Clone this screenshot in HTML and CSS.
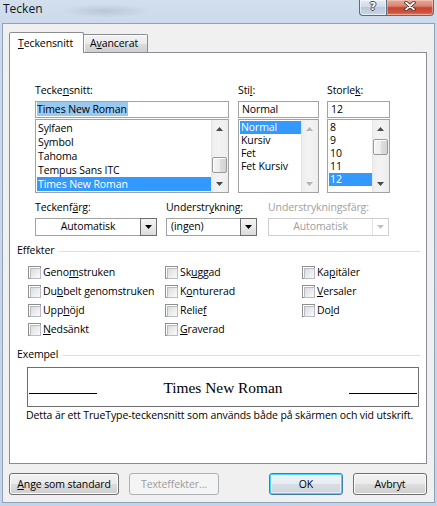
FILE: index.html
```html
<!DOCTYPE html>
<html lang="sv">
<head>
<meta charset="utf-8">
<title>Tecken</title>
<link rel="stylesheet" href="styles.css">
</head>
<body>
<div class="window">
  <div class="titlebar">
    <div class="title">Tecken</div>
    <div class="caption-buttons">
      <div class="cap-btn help"><span>?</span></div>
      <div class="cap-btn close">
        <svg width="12" height="10" viewBox="0 0 12 10"><path d="M2 1.5L10 8.5M10 1.5L2 8.5" stroke="#3a2320" stroke-width="3.4" stroke-linecap="round"/><path d="M2 1.5L10 8.5M10 1.5L2 8.5" stroke="#fff" stroke-width="1.8" stroke-linecap="round"/></svg>
      </div>
    </div>
  </div>
  <div class="client">
    <div class="tabs">
      <div class="tab active"><u>T</u>eckensnitt</div>
      <div class="tab inactive">A<u>v</u>ancerat</div>
    </div>
    <div class="panel">
      <div class="font-row">
        <div class="col-font">
          <div class="label">Tecke<u>n</u>snitt:</div>
          <div class="textbox"><span class="text-sel">Times New Roman</span></div>
          <div class="listbox">
            <div class="items">
              <div class="item">Sylfaen</div>
              <div class="item">Symbol</div>
              <div class="item">Tahoma</div>
              <div class="item">Tempus Sans ITC</div>
              <div class="item sel">Times New Roman</div>
            </div>
            <div class="scrollbar">
              <div class="sb-arrow"><svg width="7" height="4" viewBox="0 0 7 4"><path d="M3.5 0L7 4H0z" fill="#4a4a4a"/></svg></div>
              <div class="sb-track"><div class="thumb thumb-font"></div></div>
              <div class="sb-arrow"><svg width="7" height="4" viewBox="0 0 7 4"><path d="M0 0H7L3.5 4z" fill="#4a4a4a"/></svg></div>
            </div>
          </div>
        </div>
        <div class="col-style">
          <div class="label">Sti<u>l</u>:</div>
          <div class="textbox pad2">Normal</div>
          <div class="listbox">
            <div class="items short">
              <div class="item sel">Normal</div>
              <div class="item">Kursiv</div>
              <div class="item">Fet</div>
              <div class="item">Fet Kursiv</div>
            </div>
            <div class="scrollbar">
              <div class="sb-arrow"><svg width="7" height="4" viewBox="0 0 7 4"><path d="M3.5 0L7 4H0z" fill="#b4b4b4"/></svg></div>
              <div class="sb-track"></div>
              <div class="sb-arrow"><svg width="7" height="4" viewBox="0 0 7 4"><path d="M0 0H7L3.5 4z" fill="#b4b4b4"/></svg></div>
            </div>
          </div>
        </div>
        <div class="col-size">
          <div class="label">Storle<u>k</u>:</div>
          <div class="textbox pad2">12</div>
          <div class="listbox">
            <div class="items short">
              <div class="item">8</div>
              <div class="item">9</div>
              <div class="item">10</div>
              <div class="item">11</div>
              <div class="item sel">12</div>
            </div>
            <div class="scrollbar">
              <div class="sb-arrow"><svg width="7" height="4" viewBox="0 0 7 4"><path d="M3.5 0L7 4H0z" fill="#4a4a4a"/></svg></div>
              <div class="sb-track"><div class="thumb thumb-size"></div></div>
              <div class="sb-arrow"><svg width="7" height="4" viewBox="0 0 7 4"><path d="M0 0H7L3.5 4z" fill="#4a4a4a"/></svg></div>
            </div>
          </div>
        </div>
      </div>

      <div class="dd-row">
        <div class="dd-col1">
          <div class="label">Teckenf<u>ä</u>rg:</div>
          <div class="combo">
            <div class="combo-text center">Automatisk</div>
            <div class="combo-btn"><svg width="7" height="4" viewBox="0 0 7 4"><path d="M0 0H7L3.5 4z" fill="#000"/></svg></div>
          </div>
        </div>
        <div class="dd-col2">
          <div class="label">Understr<u>y</u>kning:</div>
          <div class="combo">
            <div class="combo-text left">(ingen)</div>
            <div class="combo-btn"><svg width="7" height="4" viewBox="0 0 7 4"><path d="M0 0H7L3.5 4z" fill="#000"/></svg></div>
          </div>
        </div>
        <div class="dd-col3">
          <div class="label disabled">Understrykningsfärg:</div>
          <div class="combo combo-disabled">
            <div class="combo-text center">Automatisk</div>
            <div class="combo-btn-disabled"><svg width="7" height="4" viewBox="0 0 7 4"><path d="M0 0H7L3.5 4z" fill="#c2c2c2"/></svg></div>
          </div>
        </div>
      </div>

      <div class="group group-effects">Effekter</div>
      <div class="effects">
        <div class="check"><span class="cb"></span>Geno<u>m</u>struken</div>
        <div class="check"><span class="cb"></span>Sk<u>u</u>ggad</div>
        <div class="check"><span class="cb"></span>Ka<u>p</u>itäler</div>
        <div class="check"><span class="cb"></span>Du<u>b</u>belt genomstruken</div>
        <div class="check"><span class="cb"></span>K<u>o</u>nturerad</div>
        <div class="check"><span class="cb"></span><u>V</u>ersaler</div>
        <div class="check"><span class="cb"></span>Upp<u>h</u>öjd</div>
        <div class="check"><span class="cb"></span>Relie<u>f</u></div>
        <div class="check"><span class="cb"></span>Do<u>l</u>d</div>
        <div class="check"><span class="cb"></span><u>N</u>edsänkt</div>
        <div class="check"><span class="cb"></span><u>G</u>raverad</div>
      </div>

      <div class="group group-sample">Exempel</div>
      <div class="preview">
        <div class="preview-line"></div>
        <div class="preview-text">Times New Roman</div>
        <div class="preview-line"></div>
      </div>
      <div class="desc">Detta är ett TrueType-teckensnitt som används både på skärmen och vid utskrift.</div>
    </div>

    <div class="buttons">
      <div class="btn btn-default-set"><span><u>A</u>nge som standard</span></div>
      <div class="btn btn-disabled btn-effects">Texteffekter…</div>
      <div class="btn btn-focus btn-ok">OK</div>
      <div class="btn btn-cancel">Avbryt</div>
    </div>
  </div>
</div>
</body>
</html>
```

FILE: styles.css
```css
* { box-sizing: border-box; }
html, body { margin: 0; padding: 0; }
body {
  width: 437px;
  height: 506px;
  overflow: hidden;
  font-family: "Open Sans", "Noto Sans", sans-serif;
  font-size: 10.5px;
  letter-spacing: -0.1px;
  line-height: 15px;
  color: #000;
  background: #c4d5ea;
}
u { text-decoration: underline; text-underline-offset: 1px; text-decoration-thickness: 1px; }

.window {
  width: 437px;
  height: 506px;
  display: flex;
  flex-direction: column;
  padding: 0 2px 3px;
  background:
    radial-gradient(ellipse 45px 7px at 105px 11px, rgba(110,120,140,0.22), rgba(110,120,140,0) 100%),
    linear-gradient(180deg, #d3dfed 0, #ccdaeb 23px, #c3d4e9 100%);
}

/* title bar */
.titlebar {
  height: 23px;
  flex: none;
  display: flex;
  justify-content: space-between;
  align-items: flex-start;
}
.title {
  font-size: 12px;
  letter-spacing: 0;
  line-height: 16px;
  padding: 1px 0 0 1px;
  color: #0b1627;
}
.caption-buttons { display: flex; margin-right: 1px; }
.cap-btn {
  height: 16px;
  display: flex;
  align-items: center;
  justify-content: center;
  border: 1px solid #5b6b82;
  border-top: none;
}
.help {
  width: 28px;
  border-radius: 0 0 0 4px;
  background: linear-gradient(180deg, #e3eaf3 0, #d1dcea 45%, #b9c9dc 50%, #c9d6e6 100%);
  box-shadow: inset 0 0 0 1px rgba(255,255,255,0.55);
}
.help span {
  font-family: "DejaVu Sans", sans-serif;
  font-weight: bold;
  font-size: 11px;
  line-height: 12px;
  color: #fff;
  margin-top: -2px;
  text-shadow: 1px 0 0 #3d4a5c, -1px 0 0 #3d4a5c, 0 1px 0 #3d4a5c, 0 -1px 0 #3d4a5c;
}
.close {
  width: 47px;
  border-left: none;
  border-radius: 0 0 4px 0;
  background: linear-gradient(180deg, #e9a999 0, #d98573 40%, #c64530 52%, #d0553f 85%, #e08a6e 100%);
  box-shadow: inset 0 0 0 1px rgba(255,220,210,0.45);
}
.close svg { margin-top: -3px; }

/* client */
.client {
  flex: 1;
  display: flex;
  flex-direction: column;
  background: #f0f0f0;
  border: 1px solid #8fa2ba;
  padding: 8px 7px 7px 6px;
}

.tabs {
  display: flex;
  align-items: flex-start;
  height: 21px;
  margin-bottom: -1px;
  position: relative;
  z-index: 1;
}
.tab { white-space: nowrap; border: 1px solid #898c95; border-bottom: none; }
.tab.active {
  width: 75px;
  height: 21px;
  background: #fff;
  border-radius: 2px 2px 0 0;
  padding: 3px 0 0 8px;
}
.tab.inactive {
  width: 65px;
  height: 18px;
  margin-top: 2px;
  margin-left: -1px;
  border-radius: 0 2px 0 0;
  background: linear-gradient(180deg, #f3f3f3 0, #ebebeb 50%, #dddddd 51%, #cfcfcf 100%);
  box-shadow: inset 1px 1px 0 #fcfcfc;
  padding: 1px 0 0 6px;
}

.panel {
  height: 412px;
  flex: none;
  background: #fff;
  border: 1px solid #898c95;
  padding: 30px 6px 0 7px;
  display: flex;
  flex-direction: column;
}

.label { height: 15px; margin-bottom: 3px; white-space: nowrap; }
.label.disabled { color: #a0a0a0; }

.font-row { display: flex; margin-left: 18px; }
.col-font { width: 194px; margin-right: 9px; }
.col-style { width: 81px; margin-right: 8px; }
.col-size { width: 63px; }

.textbox {
  height: 17px;
  border: 1px solid #a2a2a2;
  background: #fff;
  padding-left: 1px;
  margin-bottom: 1px;
  white-space: nowrap;
}
.textbox.pad2 { padding-left: 3px; }
.text-sel { background: #99c9ef; padding: 0 1px 0 0; }

.listbox {
  height: 74px;
  border: 1px solid #a2a2a2;
  background: #fff;
  display: flex;
}
.items { flex: 1; min-width: 0; padding: 1px 0 0 1px; }
.item { height: 14px; line-height: 14px; white-space: nowrap; padding-left: 1px; }
.items.short .item { height: 13px; line-height: 13px; }
.item.sel { background: #3399ff; color: #fff; }

.scrollbar {
  width: 17px;
  flex: none;
  display: flex;
  flex-direction: column;
  background: linear-gradient(90deg, #e3e3e3 0, #efefef 2px, #f3f3f3 50%, #ededed 100%);
}
.sb-arrow { height: 17px; flex: none; display: flex; align-items: center; justify-content: center; }
.sb-track { flex: 1; }
.thumb {
  width: 15px;
  height: 16px;
  margin-left: 1px;
  border: 1px solid #9a9a9a;
  border-radius: 2px;
  background: linear-gradient(90deg, #f6f6f6 0, #ececec 50%, #dedede 51%, #d4d4d4 100%);
  box-shadow: inset 1px 1px 0 #fdfdfd;
}
.thumb-font { margin-top: 20px; }
.thumb-size { margin-top: 2px; }

/* dropdown row */
.dd-row { display: flex; margin: 7px 0 0 18px; }
.dd-col1 { width: 122px; margin-right: 9px; }
.dd-col2 { width: 91px; margin-right: 11px; }
.dd-col3 { width: 121px; }
.combo {
  height: 18px;
  border: 1px solid #a2a2a2;
  background: #fff;
  display: flex;
}
.combo-text { flex: 1; white-space: nowrap; padding-bottom: 1px; display: flex; align-items: center; }
.combo-text.center { justify-content: center; }
.combo-text.left { padding-left: 4px; }
.combo-btn {
  width: 17px;
  margin: -1px -1px -1px 0;
  border: 1px solid #6d6d6d;
  background: linear-gradient(180deg, #f4f4f4 0, #e9e9e9 50%, #dcdcdc 100%);
  display: flex;
  align-items: center;
  justify-content: center;
}
.combo-disabled { border-color: #cfcfcf; color: #a0a0a0; }
.combo-btn-disabled {
  width: 16px;
  border-left: 1px solid #e2e2e2;
  display: flex;
  align-items: center;
  justify-content: center;
}

/* group headers */
.group { display: flex; align-items: center; height: 15px; white-space: nowrap; }
.group::after { content: ""; flex: 1; height: 1px; margin: 2px 0 0 5px; background: #d5dfe5; }
.group-effects { margin-top: 7px; }
.group-sample { margin-top: 8px; }

.effects {
  display: grid;
  grid-template-columns: 137px 137px 1fr;
  grid-auto-rows: 19px;
  margin: 5px 0 0 11px;
}
.check { display: flex; align-items: center; white-space: nowrap; }
.cb {
  width: 13px;
  height: 13px;
  flex: none;
  margin-right: 2px;
  border: 1px solid #8e8f8f;
  padding: 1px;
  background: #fff;
}
.cb::after {
  content: "";
  display: block;
  width: 9px;
  height: 9px;
  border: 1px solid #b9bdc2;
  background: linear-gradient(135deg, #d9dbde 0, #eeeff0 60%, #f9f9f9 100%);
}

.preview {
  height: 40px;
  width: 392px;
  margin: 5px 0 0 10px;
  border: 1px solid #6e6e6e;
  display: flex;
  align-items: flex-start;
  justify-content: space-between;
  padding: 11px 1px 0;
}
.preview-line { width: 68px; height: 1px; margin-top: 14px; background: #000; }
.preview-text {
  font-family: "Liberation Serif", "Times New Roman", serif;
  font-size: 15.4px;
  letter-spacing: 0;
  line-height: 18px;
  white-space: nowrap;
}
.desc { margin: 1px 0 0 9px; white-space: nowrap; }

/* bottom buttons */
.buttons { display: flex; height: 22px; margin-top: 9px; flex: none; }
.btn {
  height: 22px;
  border: 1px solid #707070;
  border-radius: 3px;
  background: linear-gradient(180deg, #f2f2f2 0, #ebebeb 50%, #dddddd 51%, #cfcfcf 100%);
  box-shadow: inset 0 0 0 1px #fbfbfb;
  display: flex;
  align-items: center;
  justify-content: center;
  white-space: nowrap;
}
.btn-default-set { width: 110px; }
.btn-effects { width: 90px; margin-left: 10px; }
.btn-ok { width: 74px; margin-left: auto; }
.btn-cancel { width: 74px; margin-left: 10px; }
.btn-disabled {
  border-color: #adb2b5;
  background: #f4f4f4;
  box-shadow: none;
  color: #9c9c9c;
}
.btn-focus {
  border-color: #3c7fb1;
  box-shadow: inset 0 0 0 1px #48d5fd, inset 0 0 0 2px rgba(255,255,255,0.5);
  background: linear-gradient(180deg, #eef3f6 0, #e6ecf0 50%, #d8dfe4 51%, #cdd5da 100%);
}
```
